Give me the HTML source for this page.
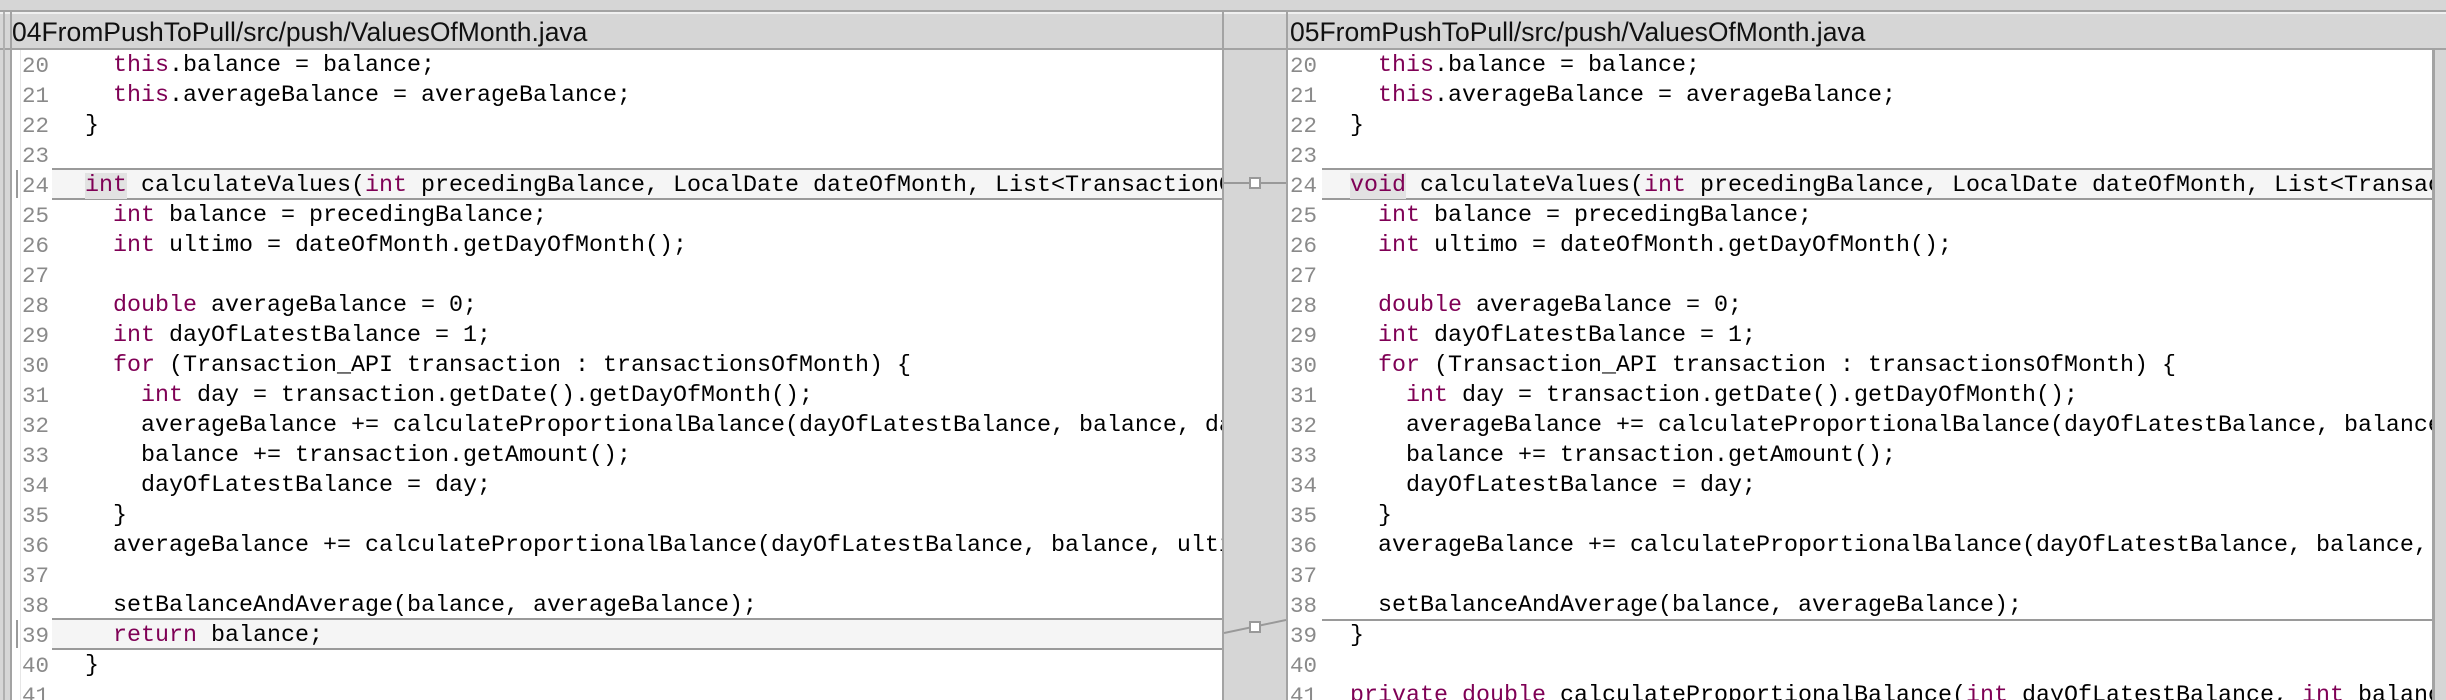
<!DOCTYPE html>
<html><head><meta charset="utf-8"><style>
*{margin:0;padding:0;box-sizing:border-box}
body{width:2446px;height:700px;overflow:hidden;background:#d6d6d6;position:relative;font-family:"Liberation Mono",monospace}
.abs{position:absolute}
.hdr{position:absolute;top:14px;height:34px;background:#d6d6d6;font-family:"Liberation Sans",sans-serif;font-size:26.5px;line-height:36px;color:#111;white-space:nowrap;overflow:hidden;padding-left:0px}
.pane{position:absolute;top:50px;height:650px;background:#fff;overflow:hidden}
.ln{position:absolute;font-size:22.5px;color:#8a8a8a;line-height:30px;height:30px;white-space:pre}
.cd{position:absolute;font-size:23.33px;color:#000;line-height:30px;height:30px;white-space:pre}
.k{color:#7f0055}
.box{position:absolute;background:#f5f5f5;border-top:2px solid #9a9a9a;border-bottom:2px solid #9a9a9a}
.hl{background:#e2e2e2}
</style></head><body>
<div class="abs" style="left:0;top:10px;width:2446px;height:2px;background:#a3a3a3"></div>
<div class="abs" style="left:0;top:12px;width:2446px;height:2px;background:#f0f0f0"></div>
<div class="abs" style="left:0;top:48px;width:2446px;height:2px;background:#a3a3a3"></div>
<div class="abs" style="left:3px;top:12px;width:2px;height:688px;background:#b0b0b0"></div>
<div class="abs" style="left:10px;top:12px;width:2px;height:688px;background:#a3a3a3"></div>
<div class="hdr" style="left:12px;width:1210px">04FromPushToPull/src/push/ValuesOfMonth.java</div>
<div class="abs" style="left:1222px;top:12px;width:2px;height:688px;background:#a3a3a3"></div>
<div class="abs" style="left:1286px;top:12px;width:2px;height:688px;background:#a3a3a3"></div>
<div class="hdr" style="left:1290px;width:1144px">05FromPushToPull/src/push/ValuesOfMonth.java</div>
<div class="abs" style="left:2432px;top:50px;width:3px;height:650px;background:#a3a3a3"></div>

<!-- left pane -->
<div class="pane" style="left:12px;width:1210px">
<div class="box" style="left:40px;top:118px;width:1180px;height:32px"></div>
<div class="box" style="left:40px;top:568px;width:1180px;height:32px"></div>
<div class="abs" style="left:4px;top:120px;width:2px;height:28px;background:#9a9a9a"></div>
<div class="abs" style="left:4px;top:570px;width:2px;height:28px;background:#9a9a9a"></div>
<div class="abs" style="left:8px;top:0;width:1px;height:650px;background:#e6e6e6"></div>
<div style="position:absolute;left:10px;top:1px">
<div class="ln" style="top:0">20</div><div class="ln" style="top:30px">21</div><div class="ln" style="top:60px">22</div><div class="ln" style="top:90px">23</div><div class="ln" style="top:120px">24</div><div class="ln" style="top:150px">25</div><div class="ln" style="top:180px">26</div><div class="ln" style="top:210px">27</div><div class="ln" style="top:240px">28</div><div class="ln" style="top:270px">29</div><div class="ln" style="top:300px">30</div><div class="ln" style="top:330px">31</div><div class="ln" style="top:360px">32</div><div class="ln" style="top:390px">33</div><div class="ln" style="top:420px">34</div><div class="ln" style="top:450px">35</div><div class="ln" style="top:480px">36</div><div class="ln" style="top:510px">37</div><div class="ln" style="top:540px">38</div><div class="ln" style="top:570px">39</div><div class="ln" style="top:600px">40</div><div class="ln" style="top:630px">41</div>
</div>
<div style="position:absolute;left:45px;top:1px">
<div class="cd" style="top:0">    <span class="k">this</span>.balance = balance;</div>
<div class="cd" style="top:30px">    <span class="k">this</span>.averageBalance = averageBalance;</div>
<div class="cd" style="top:60px">  }</div>
<div class="cd" style="top:120px">  <span class="k hl">int</span> calculateValues(<span class="k">int</span> precedingBalance, LocalDate dateOfMonth, List&lt;TransactionOfMonth&gt; transactionsOfMonth) {</div>
<div class="cd" style="top:150px">    <span class="k">int</span> balance = precedingBalance;</div>
<div class="cd" style="top:180px">    <span class="k">int</span> ultimo = dateOfMonth.getDayOfMonth();</div>
<div class="cd" style="top:240px">    <span class="k">double</span> averageBalance = 0;</div>
<div class="cd" style="top:270px">    <span class="k">int</span> dayOfLatestBalance = 1;</div>
<div class="cd" style="top:300px">    <span class="k">for</span> (Transaction_API transaction : transactionsOfMonth) {</div>
<div class="cd" style="top:330px">      <span class="k">int</span> day = transaction.getDate().getDayOfMonth();</div>
<div class="cd" style="top:360px">      averageBalance += calculateProportionalBalance(dayOfLatestBalance, balance, day);</div>
<div class="cd" style="top:390px">      balance += transaction.getAmount();</div>
<div class="cd" style="top:420px">      dayOfLatestBalance = day;</div>
<div class="cd" style="top:450px">    }</div>
<div class="cd" style="top:480px">    averageBalance += calculateProportionalBalance(dayOfLatestBalance, balance, ultimo);</div>
<div class="cd" style="top:540px">    setBalanceAndAverage(balance, averageBalance);</div>
<div class="cd" style="top:570px">    <span class="k">return</span> balance;</div>
<div class="cd" style="top:600px">  }</div>
</div>
</div>

<!-- connectors -->
<svg class="abs" style="left:1224px;top:150px" width="62" height="500">
<line x1="0" y1="33" x2="62" y2="33" stroke="#999" stroke-width="2"/>
<rect x="26" y="28" width="10" height="10" fill="#fff" stroke="#999" stroke-width="2"/>
<line x1="0" y1="483" x2="62" y2="470" stroke="#999" stroke-width="2"/>
<rect x="26" y="472" width="10" height="10" fill="#fff" stroke="#999" stroke-width="2"/>
</svg>

<!-- right pane -->
<div class="pane" style="left:1288px;width:1144px">
<div class="box" style="left:34px;top:118px;width:1110px;height:32px"></div>
<div class="abs" style="left:34px;top:569px;width:1110px;height:2px;background:#9a9a9a"></div>
<div style="position:absolute;left:2px;top:1px">
<div class="ln" style="top:0">20</div><div class="ln" style="top:30px">21</div><div class="ln" style="top:60px">22</div><div class="ln" style="top:90px">23</div><div class="ln" style="top:120px">24</div><div class="ln" style="top:150px">25</div><div class="ln" style="top:180px">26</div><div class="ln" style="top:210px">27</div><div class="ln" style="top:240px">28</div><div class="ln" style="top:270px">29</div><div class="ln" style="top:300px">30</div><div class="ln" style="top:330px">31</div><div class="ln" style="top:360px">32</div><div class="ln" style="top:390px">33</div><div class="ln" style="top:420px">34</div><div class="ln" style="top:450px">35</div><div class="ln" style="top:480px">36</div><div class="ln" style="top:510px">37</div><div class="ln" style="top:540px">38</div><div class="ln" style="top:570px">39</div><div class="ln" style="top:600px">40</div><div class="ln" style="top:630px">41</div>
</div>
<div style="position:absolute;left:34px;top:1px">
<div class="cd" style="top:0">    <span class="k">this</span>.balance = balance;</div>
<div class="cd" style="top:30px">    <span class="k">this</span>.averageBalance = averageBalance;</div>
<div class="cd" style="top:60px">  }</div>
<div class="cd" style="top:120px">  <span class="k hl">void</span> calculateValues(<span class="k">int</span> precedingBalance, LocalDate dateOfMonth, List&lt;TransactionOfMonth&gt; transactionsOfMonth) {</div>
<div class="cd" style="top:150px">    <span class="k">int</span> balance = precedingBalance;</div>
<div class="cd" style="top:180px">    <span class="k">int</span> ultimo = dateOfMonth.getDayOfMonth();</div>
<div class="cd" style="top:240px">    <span class="k">double</span> averageBalance = 0;</div>
<div class="cd" style="top:270px">    <span class="k">int</span> dayOfLatestBalance = 1;</div>
<div class="cd" style="top:300px">    <span class="k">for</span> (Transaction_API transaction : transactionsOfMonth) {</div>
<div class="cd" style="top:330px">      <span class="k">int</span> day = transaction.getDate().getDayOfMonth();</div>
<div class="cd" style="top:360px">      averageBalance += calculateProportionalBalance(dayOfLatestBalance, balance, day);</div>
<div class="cd" style="top:390px">      balance += transaction.getAmount();</div>
<div class="cd" style="top:420px">      dayOfLatestBalance = day;</div>
<div class="cd" style="top:450px">    }</div>
<div class="cd" style="top:480px">    averageBalance += calculateProportionalBalance(dayOfLatestBalance, balance, ultimo);</div>
<div class="cd" style="top:540px">    setBalanceAndAverage(balance, averageBalance);</div>
<div class="cd" style="top:570px">  }</div>
<div class="cd" style="top:630px">  <span class="k">private</span> <span class="k">double</span> calculateProportionalBalance(<span class="k">int</span> dayOfLatestBalance, <span class="k">int</span> balance, <span class="k">int</span> day) {</div>
</div>
</div>
</body></html>
